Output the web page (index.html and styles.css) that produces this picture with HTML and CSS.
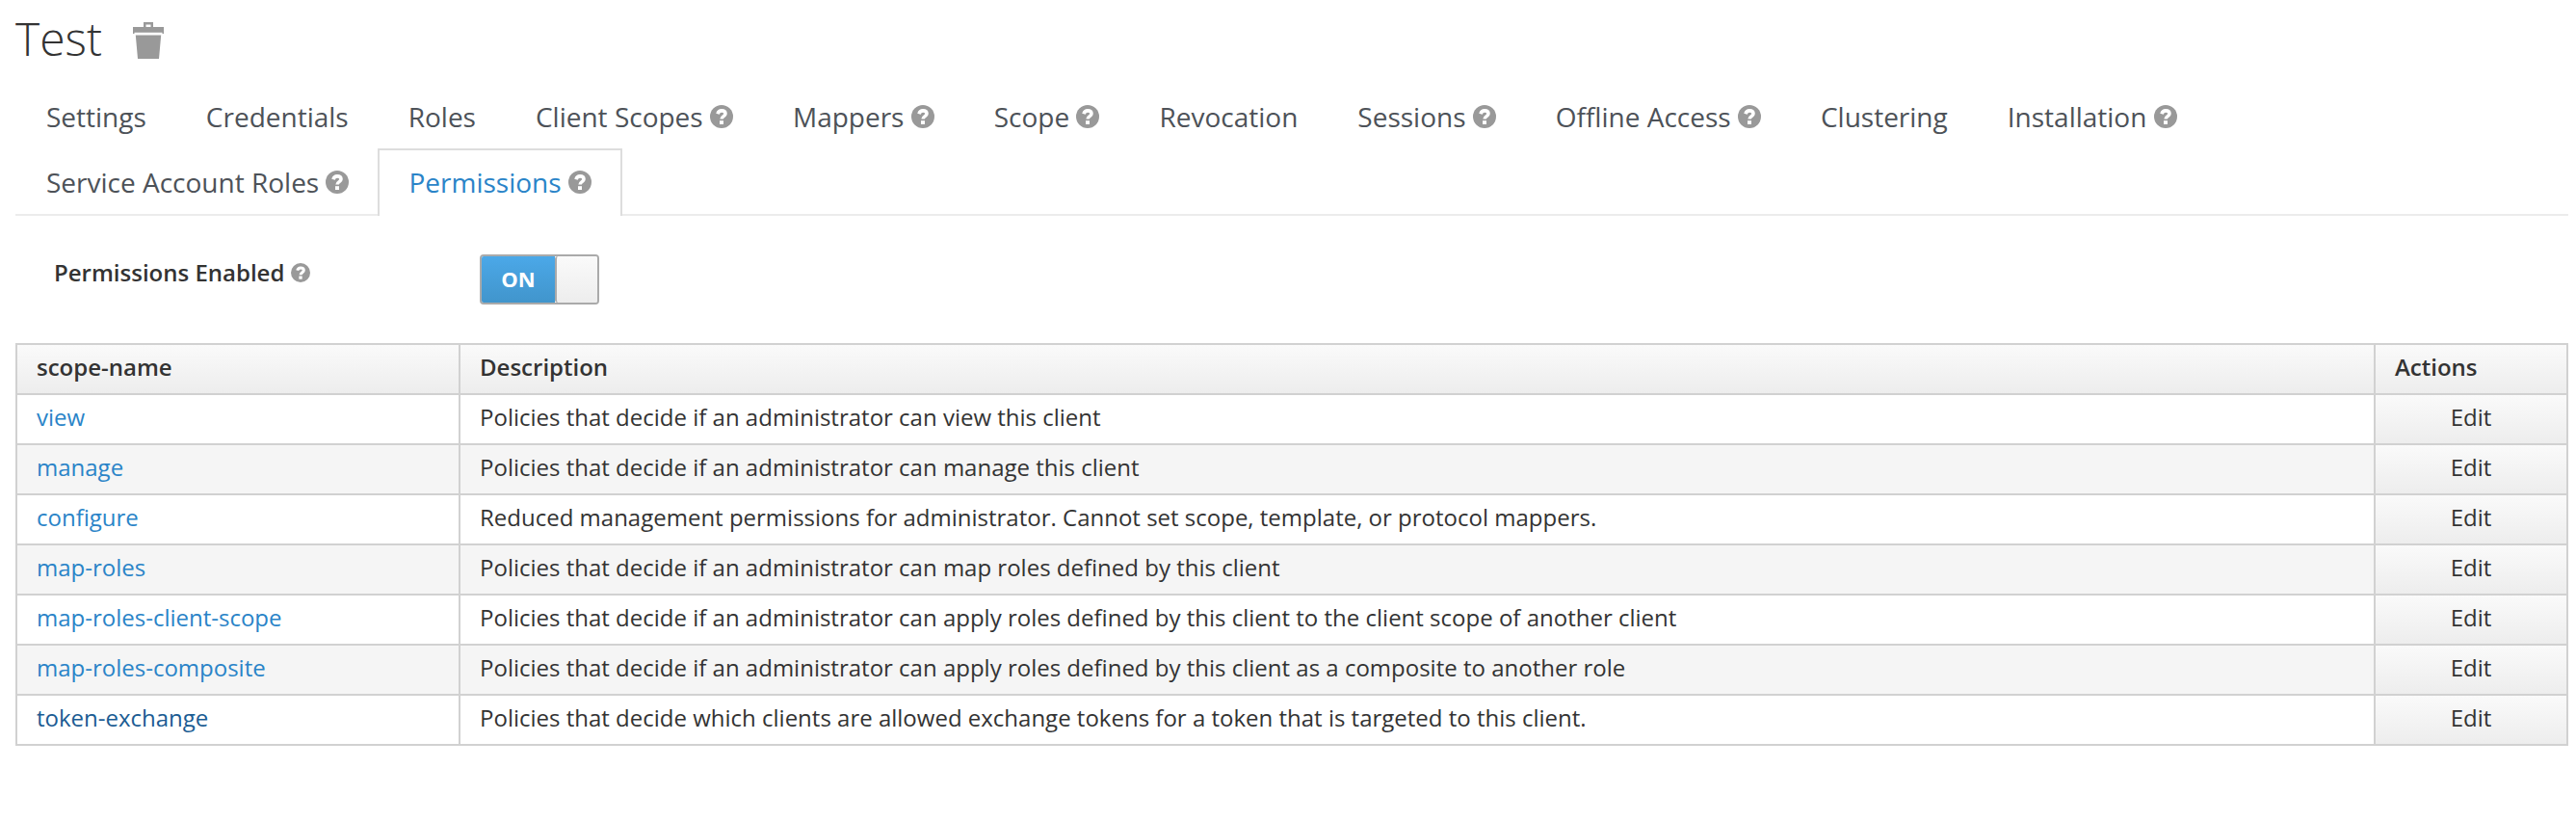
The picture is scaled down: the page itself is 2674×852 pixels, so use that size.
FILE: index.html
```html
<!DOCTYPE html>
<html lang="en">
<head>
<meta charset="utf-8">
<title>Test</title>
<link rel="stylesheet" href="styles.css">
</head>
<body>
<svg width="0" height="0" class="defs">
  <symbol id="help" viewBox="0 0 24 24"><circle cx="12" cy="12" r="12" fill="#999"/><path d="M8 9.200C8.600 7 10 5.900 12 5.900c2.300 0 4 1.200 4 3.200 0 2.600-3.900 2.500-3.900 5.500" fill="none" stroke="#fff" stroke-width="3.600"/><rect x="10" y="16.200" width="4" height="3.800" fill="#fff"/></symbol>
</svg>
<main class="page">
  <h1 class="title">Test
    <svg class="trash" viewBox="0 0 32 38"><path fill="#999" fill-rule="evenodd" d="M11 0h10v5h11v7h-1.500v-1.200h-29V12H0V5h11zM13.500 2.600V5h5V2.600zM2.800 13.500h26.400L27 38H5z"/></svg>
  </h1>
  <ul class="tabs">
    <li class="tab">Settings</li>
    <li class="tab">Credentials</li>
    <li class="tab">Roles</li>
    <li class="tab">Client Scopes <svg class="help"><use href="#help"/></svg></li>
    <li class="tab">Mappers <svg class="help"><use href="#help"/></svg></li>
    <li class="tab">Scope <svg class="help"><use href="#help"/></svg></li>
    <li class="tab">Revocation</li>
    <li class="tab">Sessions <svg class="help"><use href="#help"/></svg></li>
    <li class="tab">Offline Access <svg class="help"><use href="#help"/></svg></li>
    <li class="tab">Clustering</li>
    <li class="tab">Installation <svg class="help"><use href="#help"/></svg></li>
    <li class="break"></li>
    <li class="tab">Service Account Roles <svg class="help"><use href="#help"/></svg></li>
    <li class="tab active">Permissions <svg class="help"><use href="#help"/></svg></li>
  </ul>
  <div class="field">
    <label class="label">Permissions Enabled <svg class="help small"><use href="#help"/></svg></label>
    <div class="switch"><span class="on">ON</span><span class="knob"></span></div>
  </div>
  <table class="grid">
    <colgroup><col class="c-name"><col><col class="c-act"></colgroup>
    <thead><tr><th>scope-name</th><th>Description</th><th>Actions</th></tr></thead>
    <tbody>
      <tr><td><a>view</a></td><td>Policies that decide if an administrator can view this client</td><td class="edit">Edit</td></tr>
      <tr><td><a>manage</a></td><td>Policies that decide if an administrator can manage this client</td><td class="edit">Edit</td></tr>
      <tr><td><a>configure</a></td><td>Reduced management permissions for administrator. Cannot set scope, template, or protocol mappers.</td><td class="edit">Edit</td></tr>
      <tr><td><a>map-roles</a></td><td>Policies that decide if an administrator can map roles defined by this client</td><td class="edit">Edit</td></tr>
      <tr><td><a>map-roles-client-scope</a></td><td>Policies that decide if an administrator can apply roles defined by this client to the client scope of another client</td><td class="edit">Edit</td></tr>
      <tr><td><a>map-roles-composite</a></td><td>Policies that decide if an administrator can apply roles defined by this client as a composite to another role</td><td class="edit">Edit</td></tr>
      <tr><td><a class="hover">token-exchange</a></td><td>Policies that decide which clients are allowed exchange tokens for a token that is targeted to this client.</td><td class="edit">Edit</td></tr>
    </tbody>
  </table>
</main>
</body>
</html>
```
FILE: styles.css
```css
* { box-sizing: border-box; }
body { margin: 0; background: #fff; color: #333; font: 24px/40px "Open Sans", sans-serif; }
.defs { position: absolute; }
.page { padding: 0 8px 0 16px; }
.title { display: flex; align-items: center; gap: 32px; height: 86px; margin: 0; padding-bottom: 6px; font-size: 48px; font-weight: 300; line-height: 80px; }
.trash { width: 32px; height: 38px; margin-top: 4px; }
.tabs { display: flex; flex-wrap: wrap; height: 138px; margin: 0; padding: 0; list-style: none; border-bottom: 2px solid #ececec; }
.tab { display: flex; align-items: center; gap: 7.28px; height: 68px; margin-right: -2px; padding: 0 30px; border: 2px solid transparent; border-bottom: 0; font-size: 28px; color: #4d5258; white-space: nowrap; }
.tab.active { height: 70px; padding-bottom: 2px; background: #fff; border-color: #ddd; color: #2a84c8; }
.break { flex-basis: 100%; height: 0; }
.help { width: 24px; height: 24px; flex: none; }
.help.small { width: 20px; height: 20px; }
.field { display: flex; height: 132px; padding-top: 40px; }
.label { display: flex; align-items: center; gap: 7px; width: 482px; height: 38px; padding-left: 40px; font-weight: 600; }
.switch { display: flex; width: 124px; height: 52px; border: 2px solid #aaa; border-radius: 4px; overflow: hidden; }
.on { width: 76px; background: linear-gradient(#4ba8e8, #4195cc); color: #fff; font-size: 22px; font-weight: 700; line-height: 47px; text-align: center; }
.knob { flex: 1; border-left: 2px solid #aaa; border-radius: 3px 0 0 3px; background: linear-gradient(#fafafa, #ededed); }
.grid { width: 2650px; border-collapse: separate; border-spacing: 0; table-layout: fixed; border: solid #d1d1d1; border-width: 2px 0 0 2px; }
.c-name { width: 460px; }
.c-act { width: 200px; }
.grid th, .grid td { height: 52px; padding: 0 20px 4px; border: solid #d1d1d1; border-width: 0 2px 2px 0; text-align: left; line-height: 40px; white-space: nowrap; }
.grid th { font-weight: 600; }
.grid th, .grid .edit { background: linear-gradient(#fafafa, #ededed); }
.grid tbody tr:nth-child(even) td:not(.edit) { background: #f5f5f5; }
.grid td.edit { text-align: center; }
.grid a { color: #2a84c8; }
.grid a.hover { color: #1b5c93; }
```
